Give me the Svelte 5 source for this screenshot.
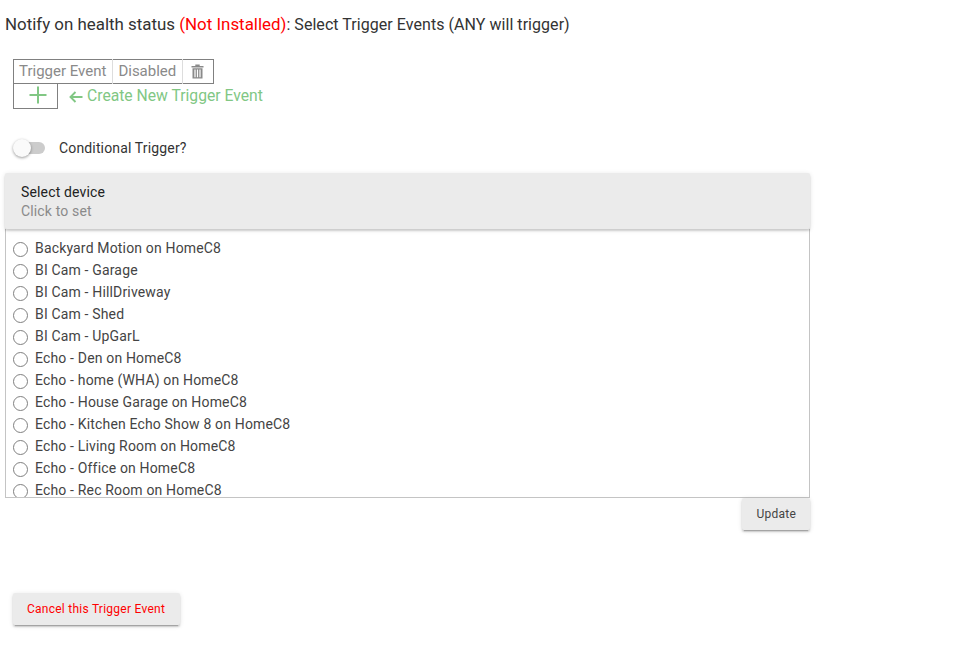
<script lang="ts">
  const devices = [
    'Backyard Motion on HomeC8',
    'BI Cam - Garage',
    'BI Cam - HillDriveway',
    'BI Cam - Shed',
    'BI Cam - UpGarL',
    'Echo - Den on HomeC8',
    'Echo - home (WHA) on HomeC8',
    'Echo - House Garage on HomeC8',
    'Echo - Kitchen Echo Show 8 on HomeC8',
    'Echo - Living Room on HomeC8',
    'Echo - Office on HomeC8',
    'Echo - Rec Room on HomeC8'
  ];
</script>

<div class="page">
  <div class="title"><span class="lead">Notify on health status <span class="red">(Not Installed)</span></span>: Select Trigger Events (ANY will trigger)</div>

  <div class="events">
    <table class="event-table">
      <tbody>
        <tr>
          <td class="name">Trigger Event</td>
          <td>Disabled</td>
          <td class="trash">
            <svg width="13" height="15" viewBox="0 0 13 15" fill="#8a8a8a">
              <path d="M0.5 2h3.8V0.6h4.4V2h3.8v1.4H0.5z" />
              <path d="M1.5 4.2h10V14.6h-10zM3.4 5.6v7.6h1.2V5.6zM5.9 5.6v7.6h1.2V5.6zM8.4 5.6v7.6h1.2V5.6z" fill-rule="evenodd" />
            </svg>
          </td>
        </tr>
      </tbody>
    </table>
    <div class="add-row">
      <div class="add-box">
        <svg width="18" height="18" viewBox="0 0 18 18" fill="#81c784">
          <path d="M8 0.5h2v7.5h7.5v2H10v7.5H8V10H0.5V8H8z" />
        </svg>
      </div>
      <svg class="arrow" width="14" height="12" viewBox="0 0 14 12" fill="none" stroke="#81c784" stroke-width="1.9">
        <path d="M13.5 6H1.5M6.5 1l-5 5 5 5" />
      </svg>
      <span class="create">Create New Trigger Event</span>
    </div>
  </div>

  <div class="switch-row">
    <span class="switch"><span class="knob"></span></span>
    <span class="switch-label">Conditional Trigger?</span>
  </div>

  <div class="select-wrap">
    <div class="select-head">
      <div class="select-title">Select device</div>
      <div class="select-sub">Click to set</div>
    </div>
    <div class="list">
      {#each devices as d}
        <label class="item"><span class="radio"></span>{d}</label>
      {/each}
    </div>
    <div class="update-row">
      <button class="btn">Update</button>
    </div>
  </div>

  <button class="btn cancel">Cancel this Trigger Event</button>
</div>

<style>
  :global(body) { background: #fff; }
  .page { height: 654px; box-sizing: border-box; padding: 15px 0 0 5px; font-family: Roboto, sans-serif; color: #333; overflow: hidden; }
  .title { font-size: 16px; line-height: 19px; letter-spacing: 0.05px; }
  .lead { font-size: 16.9px; letter-spacing: 0; }
  .red { color: #f00; }
  .events { margin: 25px 0 0 8px; }
  .event-table { border-collapse: collapse; border: 1px solid #808080; font-size: 15px; color: #8a8a8a; }
  .event-table td { height: 23px; padding: 0 6px 0 5px; border-right: 1px solid #ddd; line-height: 23px; }
  .event-table td.trash { border-right: 0; padding: 0 9px 0 8px; width: 13px; line-height: 0; }
  .add-row { display: flex; align-items: center; }
  .add-box { width: 43px; height: 24px; border: 1px solid #808080; border-top: 0; display: flex; align-items: center; justify-content: center; }
  .add-box svg { margin: 0 0 2px 5px; }
  .arrow { margin-left: 11px; }
  .create { margin: 0 0 2px 4px; font-size: 15.7px; color: #81c784; }
  .switch-row { display: flex; align-items: center; height: 20px; margin: 29px 0 0 8px; }
  .switch { position: relative; width: 32px; height: 12px; }
  .switch::before { content: ''; position: absolute; left: 4px; top: 0; width: 28px; height: 12px; border-radius: 6px; background: #ccc; }
  .knob { position: absolute; left: 0; top: -3px; width: 18px; height: 18px; border-radius: 50%; background: #fafafa; box-shadow: 0 1px 3px rgba(0, 0, 0, 0.4); }
  .switch-label { margin-left: 14px; font-size: 14px; letter-spacing: 0.15px; }
  .select-wrap { width: 805px; margin-top: 15px; }
  .select-head { height: 56px; box-sizing: border-box; padding: 10px 16px; background: #ebebeb; border-radius: 2px; box-shadow: 0 2px 2px rgba(0, 0, 0, 0.14), 0 1px 5px rgba(0, 0, 0, 0.12); position: relative; }
  .select-title { font-size: 14px; line-height: 18px; letter-spacing: 0.15px; color: #222; }
  .select-sub { font-size: 14px; line-height: 20px; letter-spacing: 0.15px; color: #8a8a8a; }
  .list { height: 269px; box-sizing: border-box; border: 1px solid #c4c4c4; border-top: 0; padding-top: 8px; overflow: hidden; }
  .item { display: flex; align-items: center; height: 22px; padding-left: 7px; font-size: 14px; letter-spacing: 0.16px; color: #444; }
  .radio { width: 13px; height: 13px; border: 1px solid #808080; border-radius: 50%; margin-right: 7px; flex: none; position: relative; top: 1px; }
  .update-row { display: flex; justify-content: flex-end; }
  .btn { border: 0; border-radius: 2px; background: #ebebeb; font-family: Roboto, sans-serif; font-size: 12px; letter-spacing: 0.25px; color: #444; height: 32px; padding: 0 14px; box-shadow: 0 2px 2px rgba(0, 0, 0, 0.14), 0 3px 1px -2px rgba(0, 0, 0, 0.2), 0 1px 5px rgba(0, 0, 0, 0.12); }
  .cancel { display: block; margin: 63px 0 0 8px; padding: 0 15px 0 14px; color: #f00; }
</style>
